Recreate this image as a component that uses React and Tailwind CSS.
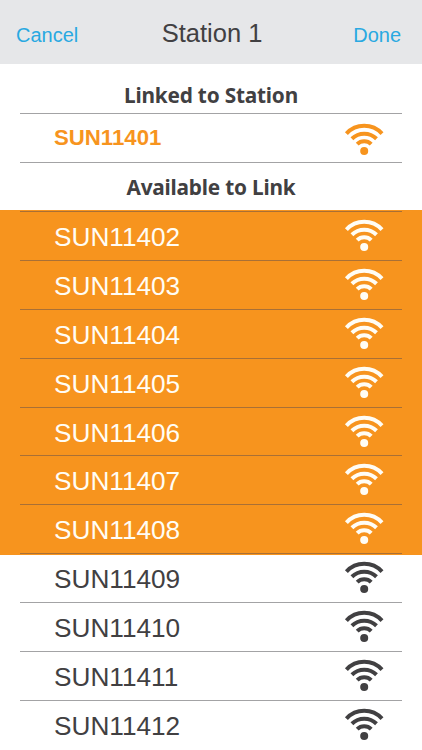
import clsx from 'clsx';

const selectedSensors = ['SUN11402', 'SUN11403', 'SUN11404', 'SUN11405', 'SUN11406', 'SUN11407', 'SUN11408'];
const otherSensors = ['SUN11409', 'SUN11410', 'SUN11411', 'SUN11412'];

function SignalIcon() {
    return (
        <svg width="40" height="34" viewBox="0 0 40 34" fill="none" stroke="currentColor" strokeWidth="4">
            <path d="M2.4 10.6 A24.2 24.2 0 0 1 38 10.6" />
            <path d="M7.9 15.8 A17.6 17.6 0 0 1 32.5 15.8" />
            <path d="M13.2 21.2 A9.9 9.9 0 0 1 27.2 21.2" />
            <circle cx="20.2" cy="28" r="4" fill="currentColor" stroke="none" />
        </svg>
    );
}

function SectionTitle({ children, className }) {
    return (
        <h2 className={clsx("flex justify-center font-['Noto_Sans',sans-serif] text-[20.8px] leading-[28px] font-bold tracking-[-0.2px]", className)}>
            {children}
        </h2>
    );
}

function SensorRow({ id, linked, lineClass = 'border-[#a3a3a5]' }) {
    return (
        <li className="h-[48.87px] px-5">
            <div className={clsx('flex h-full items-start justify-between border-t pr-[18px] pl-[34px]', lineClass)}>
                <span className={clsx('leading-[32px] whitespace-nowrap', linked ? 'pt-[8px] text-[22.2px] font-bold' : 'pt-[9px] text-[26.2px]')}>
                    {id}
                </span>
                <div className={linked ? 'pt-[8.6px]' : 'pt-[7px]'}>
                    <SignalIcon />
                </div>
            </div>
        </li>
    );
}

export default function App() {
    return (
        <div className="h-[750px] w-[422px] overflow-hidden bg-white font-['Liberation_Sans',Arial,sans-serif] text-[#414042]">
            <header className="grid h-16 grid-cols-[1fr_auto_1fr] items-baseline bg-[#e6e7e9] px-4 pt-[17px]">
                <button className="justify-self-start text-[20px] text-[#29a9e1]">Cancel</button>
                <h1 className="pl-[2px] text-[25.5px] leading-[32px]">Station 1</h1>
                <button className="justify-self-end pr-[5px] text-[20px] text-[#29a9e1]">Done</button>
            </header>

            <section>
                <SectionTitle className="h-[49.4px] pt-[16.8px]">Linked to Station</SectionTitle>
                <ul className="text-[#f7941e]">
                    <SensorRow id="SUN11401" linked />
                </ul>
            </section>

            <section>
                <div className="h-[48.87px] px-5">
                    <SectionTitle className="h-full border-t border-[#a3a3a5] pt-[9.8px]">Available to Link</SectionTitle>
                </div>
                {/* orange runs a pixel past the first and last divider */}
                <ul className="-mt-px -mb-[1.5px] bg-[#f7941e] pt-px pb-[1.5px] text-[#fffdf5]">
                    {selectedSensors.map((id) => (
                        <SensorRow key={id} id={id} lineClass="border-[#a97036]" />
                    ))}
                </ul>
                <ul>
                    {otherSensors.map((id, i) => (
                        <SensorRow key={id} id={id} lineClass={i === 0 ? 'border-[#a97036]' : undefined} />
                    ))}
                </ul>
            </section>
        </div>
    );
}
